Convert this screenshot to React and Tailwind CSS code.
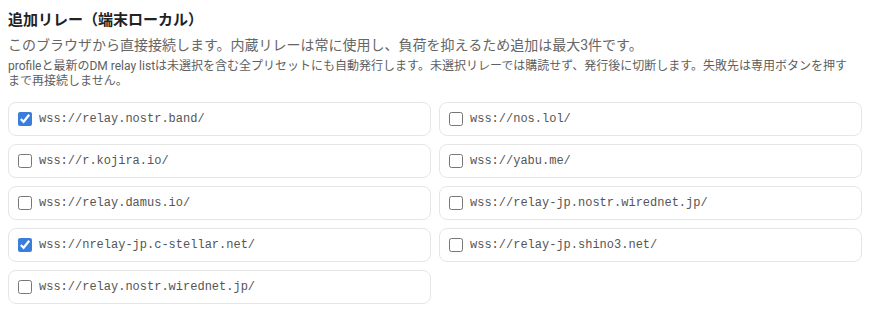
const relays = [
  { url: "wss://relay.nostr.band/", checked: true },
  { url: "wss://nos.lol/", checked: false },
  { url: "wss://r.kojira.io/", checked: false },
  { url: "wss://yabu.me/", checked: false },
  { url: "wss://relay.damus.io/", checked: false },
  { url: "wss://relay-jp.nostr.wirednet.jp/", checked: false },
  { url: "wss://nrelay-jp.c-stellar.net/", checked: true },
  { url: "wss://relay-jp.shino3.net/", checked: false },
  { url: "wss://relay.nostr.wirednet.jp/", checked: false },
];

const App = () => {
  return (
    <div className="bg-white min-h-screen font-['Roboto','Noto_Sans_CJK_JP',sans-serif]">
      <div className="w-[854px] ml-2 pt-[10px]">
        {/* Header */}
        <h2 className="text-[15px] leading-5 font-bold text-[#222]">追加リレー（端末ローカル）</h2>
        <p className="mt-[5px] text-[14px] leading-5 text-[#666]">
          このブラウザから直接接続します。内蔵リレーは常に使用し、負荷を抑えるため追加は最大3件です。
        </p>
        <p className="mt-[4px] text-[12px] leading-[15px] text-[#606060] pr-[10px]">
          profileと最新のDM relay listは未選択を含む全プリセットにも自動発行します。未選択リレーでは購読せず、発行後に切断します。失敗先は専用ボタンを押すまで再接続しません。
        </p>

        {/* Relay list */}
        <div className="mt-[13px] grid grid-cols-2 gap-2">
          {relays.map((r) => (
            <label
              key={r.url}
              className="h-[34px] flex items-center gap-[7px] pl-[9px] border border-[#e6e6e6] rounded-lg bg-white"
            >
              <input
                type="checkbox"
                defaultChecked={r.checked}
                className="w-[14px] h-[14px] accent-[#3b7ddd]"
              />
              <span className="font-['Liberation_Mono',monospace] text-[12px] text-[#555]">{r.url}</span>
            </label>
          ))}
        </div>
      </div>
    </div>
  );
};

export default App;
